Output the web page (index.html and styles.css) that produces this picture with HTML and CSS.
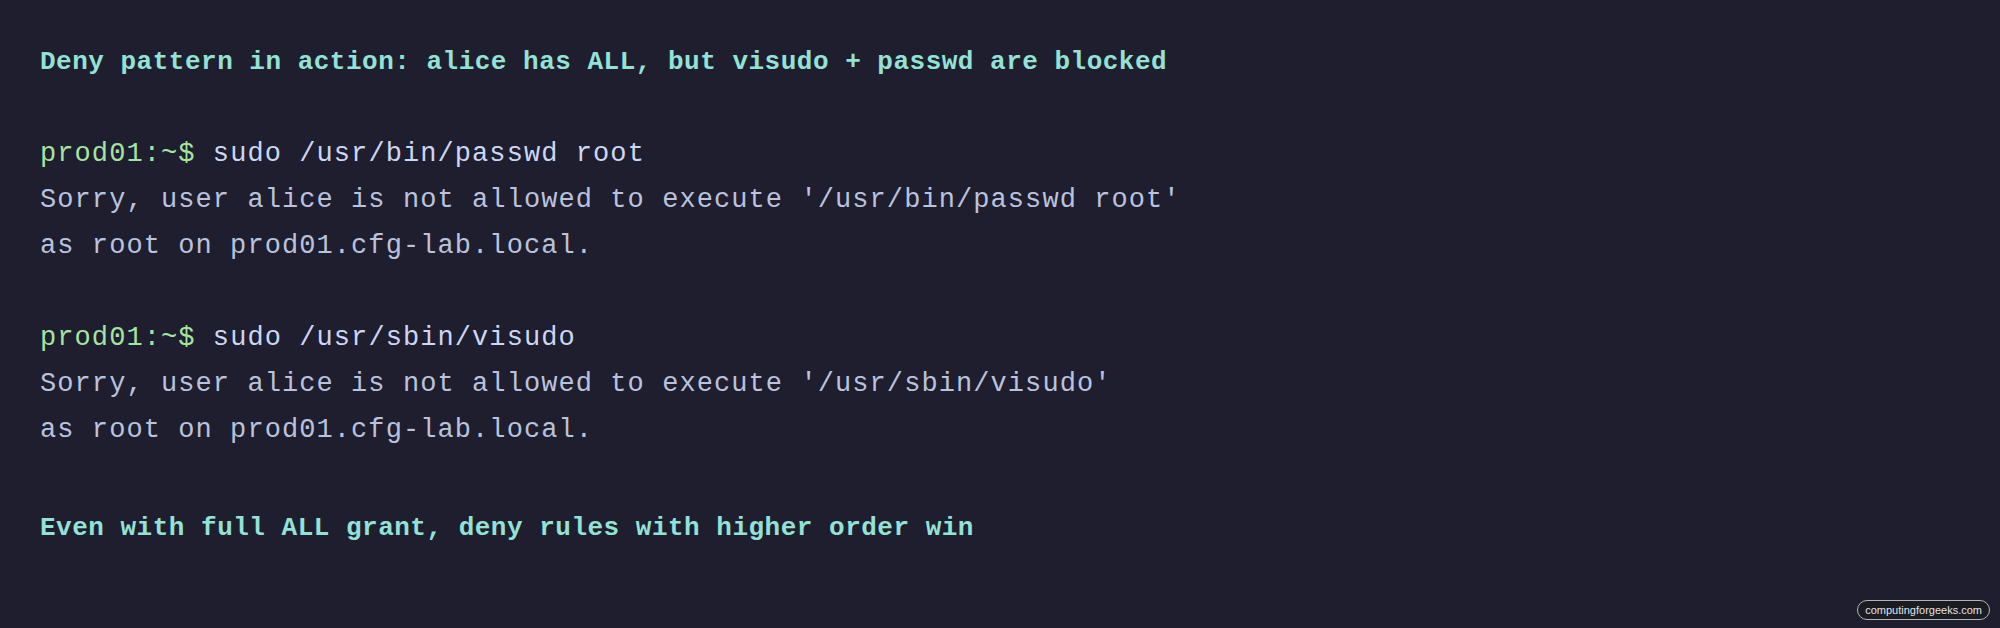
FILE: index.html
```html
<!DOCTYPE html>
<html lang="en">
<head>
<meta charset="utf-8">
<title>Deny pattern in action</title>
<link rel="stylesheet" href="styles.css">
</head>
<body>
<main class="terminal">
  <div class="line heading">Deny pattern in action: alice has ALL, but visudo + passwd are blocked</div>
  <div class="line blank"></div>
  <div class="line"><span class="prompt">prod01:~$</span> <span class="cmd">sudo /usr/bin/passwd root</span></div>
  <div class="line out">Sorry, user alice is not allowed to execute '/usr/bin/passwd root'</div>
  <div class="line out">as root on prod01.cfg-lab.local.</div>
  <div class="line blank"></div>
  <div class="line"><span class="prompt">prod01:~$</span> <span class="cmd">sudo /usr/sbin/visudo</span></div>
  <div class="line out">Sorry, user alice is not allowed to execute '/usr/sbin/visudo'</div>
  <div class="line out">as root on prod01.cfg-lab.local.</div>
  <div class="line blank"></div>
  <div class="line heading last">Even with full ALL grant, deny rules with higher order win</div>
</main>
<div class="badge">computingforgeeks.com</div>
</body>
</html>
```

FILE: styles.css
```css
html, body {
  margin: 0;
  padding: 0;
  background: #1e1e2e;
}

body {
  width: 2000px;
  height: 628px;
  overflow: hidden;
  position: relative;
}

.terminal {
  padding: 39px 0 0 40px;
  font-family: "Liberation Mono", "DejaVu Sans Mono", monospace;
  font-size: 27px;
  letter-spacing: 1.08px;
  color: #cdd6f4;
}

.line {
  height: 46px;
  line-height: 46px;
  white-space: pre;
}

.heading {
  color: #94e2d5;
  font-weight: bold;
  font-size: 26px;
  letter-spacing: 0.5px;
}

.heading.last {
  margin-top: 6px;
}

.prompt {
  color: #a6e3a1;
}

.cmd {
  color: #cdd6f4;
}

.out {
  color: #bac2de;
}

.badge {
  position: absolute;
  right: 10px;
  bottom: 8px;
  height: 18px;
  line-height: 18px;
  padding: 0 7px;
  border: 1px solid #b4b4b8;
  border-radius: 10px;
  background: #1b1b22;
  color: #e2e2e6;
  font-family: "Liberation Sans", Arial, sans-serif;
  font-size: 11px;
}
```
